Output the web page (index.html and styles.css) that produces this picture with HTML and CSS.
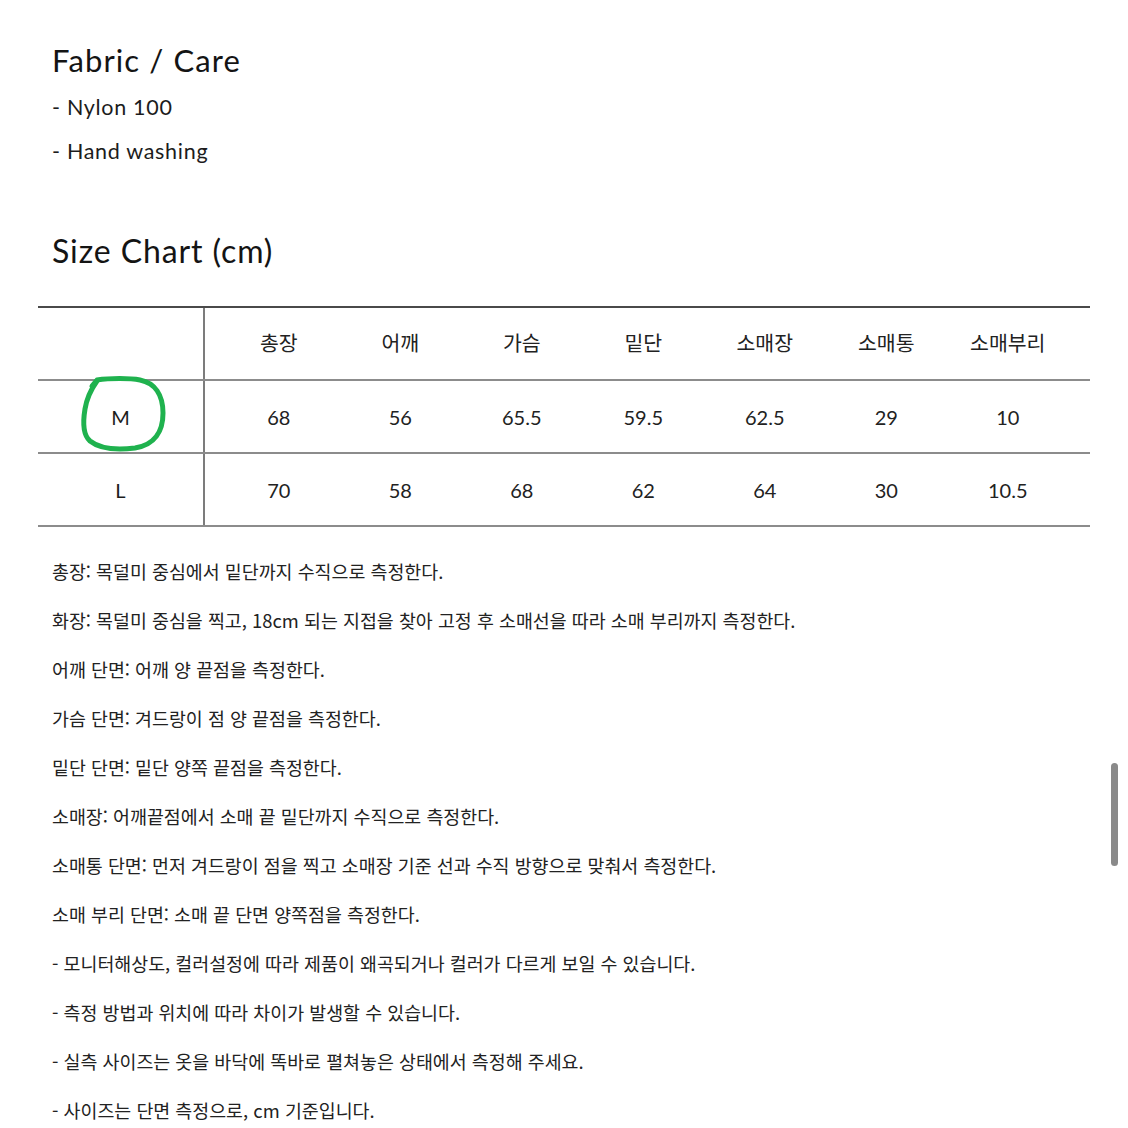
FILE: index.html
```html
<!DOCTYPE html>
<html lang="ko">
<head>
<meta charset="utf-8">
<title>Fabric / Care - Size Chart</title>
<link rel="stylesheet" href="styles.css">
</head>
<body>
<main class="page">
  <section class="fabric">
    <h2 class="title">Fabric / Care</h2>
    <ul class="care-list">
      <li>- Nylon 100</li>
      <li>- Hand washing</li>
    </ul>
  </section>

  <section class="size">
    <h2 class="title size-title">Size Chart (cm)</h2>
    <div class="chart">
      <div class="row head">
        <div class="label"></div>
        <div class="cells">
          <span>총장</span><span>어깨</span><span>가슴</span><span>밑단</span><span>소매장</span><span>소매통</span><span>소매부리</span>
        </div>
      </div>
      <div class="row">
        <div class="label circled">M
          <svg class="mark" viewBox="0 0 166 73" aria-hidden="true">
            <path d="M54 5 L59 -1 C72 -3 92 -3 102 -1 C117 2 125 14 125 32 C125 50 117 64 97 67 C80 69 62 68 52 60 C45 54 45 40 47 28 C49 16 54 7 59 0" />
          </svg>
        </div>
        <div class="cells">
          <span>68</span><span>56</span><span>65.5</span><span>59.5</span><span>62.5</span><span>29</span><span>10</span>
        </div>
      </div>
      <div class="row">
        <div class="label">L</div>
        <div class="cells">
          <span>70</span><span>58</span><span>68</span><span>62</span><span>64</span><span>30</span><span>10.5</span>
        </div>
      </div>
    </div>
  </section>

  <ul class="notes">
    <li>총장: 목덜미 중심에서 밑단까지 수직으로 측정한다.</li>
    <li>화장: 목덜미 중심을 찍고, 18cm 되는 지접을 찾아 고정 후 소매선을 따라 소매 부리까지 측정한다.</li>
    <li>어깨 단면: 어깨 양 끝점을 측정한다.</li>
    <li>가슴 단면: 겨드랑이 점 양 끝점을 측정한다.</li>
    <li>밑단 단면: 밑단 양쪽 끝점을 측정한다.</li>
    <li>소매장: 어깨끝점에서 소매 끝 밑단까지 수직으로 측정한다.</li>
    <li>소매통 단면: 먼저 겨드랑이 점을 찍고 소매장 기준 선과 수직 방향으로 맞춰서 측정한다.</li>
    <li>소매 부리 단면: 소매 끝 단면 양쪽점을 측정한다.</li>
    <li>- 모니터해상도, 컬러설정에 따라 제품이 왜곡되거나 컬러가 다르게 보일 수 있습니다.</li>
    <li>- 측정 방법과 위치에 따라 차이가 발생할 수 있습니다.</li>
    <li>- 실측 사이즈는 옷을 바닥에 똑바로 펼쳐놓은 상태에서 측정해 주세요.</li>
    <li>- 사이즈는 단면 측정으로, cm 기준입니다.</li>
  </ul>
</main>
<div class="scroll-thumb"></div>
</body>
</html>
```

FILE: styles.css
```css
html {
  overflow: hidden;
}
body {
  margin: 0;
  background: #ffffff;
  color: #1c1c1c;
  font-family: "Lato", "Noto Sans CJK KR", sans-serif;
}
.page {
  padding: 42px 38px 0;
}
.title {
  margin: 0 0 0 14px;
  font-weight: 400;
  font-size: 31px;
  line-height: 36px;
  letter-spacing: 1.1px;
  color: #141414;
}
.care-list {
  list-style: none;
  margin: 7px 0 0 14px;
  padding: 0;
  font-size: 21.5px;
  line-height: 44px;
  letter-spacing: 0.7px;
}
.size-title {
  margin-top: 59px;
  font-size: 32px;
  line-height: 38px;
  letter-spacing: 0.9px;
}
.chart {
  margin-top: 36px;
  border-top: 2px solid #4a4a4a;
}
.row {
  display: flex;
  height: 71px;
  border-bottom: 2px solid #8c8c8c;
}
.row.head {
  height: 71px;
  font-family: "Noto Sans CJK KR", sans-serif;
}
.label {
  position: relative;
  width: 165px;
  flex: none;
  border-right: 2px solid #7c7c7c;
  display: flex;
  align-items: center;
  justify-content: center;
  font-size: 20px;
}
.cells {
  display: grid;
  grid-template-columns: repeat(7, 121.5px);
  padding-left: 13px;
  align-items: center;
  font-size: 20px;
  color: #222;
}
.cells span {
  text-align: center;
}
.row.head .cells {
  font-size: 20.5px;
  padding-bottom: 3px;
}
.mark {
  position: absolute;
  left: 0;
  top: 0;
  width: 166px;
  height: 73px;
  overflow: visible;
}
.mark path {
  fill: none;
  stroke: #1fb24e;
  stroke-width: 5;
  stroke-linecap: round;
  stroke-linejoin: round;
}
.notes {
  list-style: none;
  margin: 20px 0 0 14px;
  padding: 0;
  font-family: "Noto Sans CJK KR", sans-serif;
  font-size: 18.4px;
  line-height: 49px;
  color: #222;
}
.scroll-thumb {
  position: fixed;
  right: 10px;
  top: 763px;
  width: 7px;
  height: 103px;
  border-radius: 4px;
  background: #8a8a8a;
}
```
